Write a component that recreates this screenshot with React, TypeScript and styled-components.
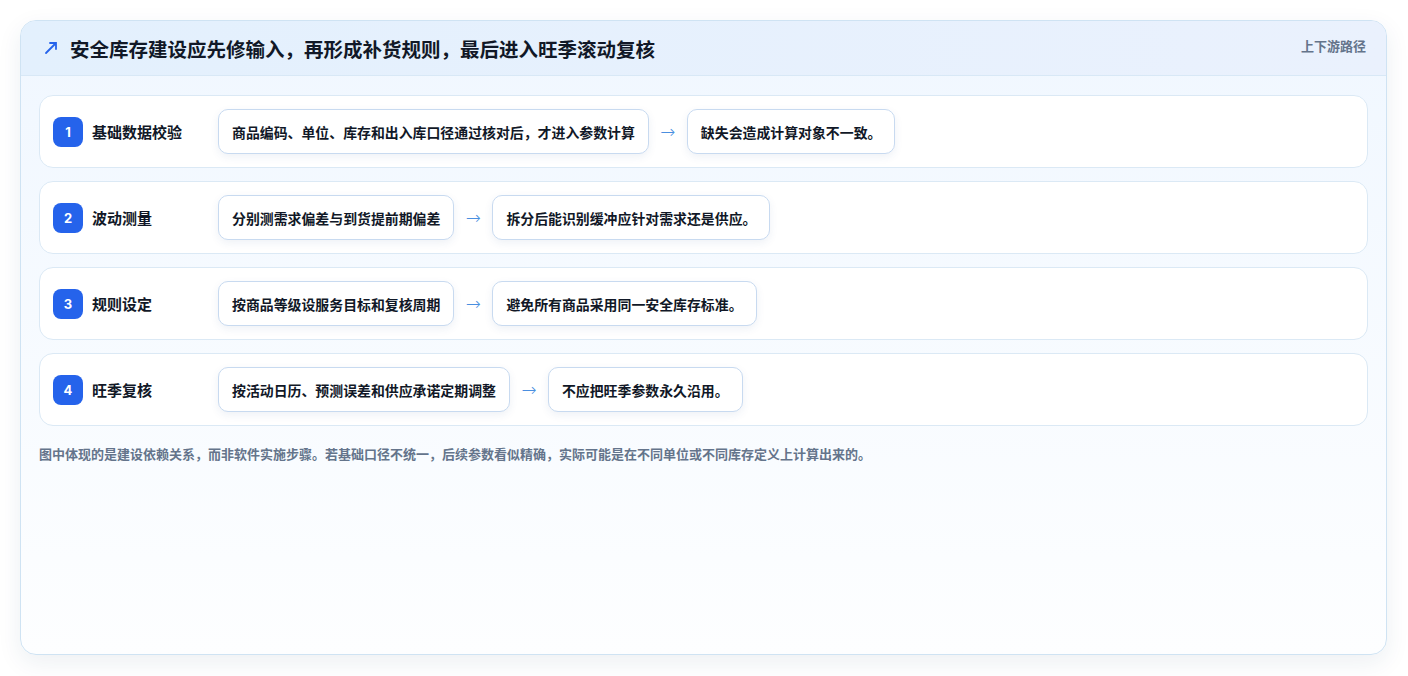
import React from "react";
import styled, { createGlobalStyle } from "styled-components";

const G = createGlobalStyle`
  body { margin: 0; background: #fff; font-family: "Inter", "Noto Sans CJK SC", sans-serif; }
`;
const Page = styled.div`padding: 20px 21px 21px 20px;`;
const Card = styled.div`
  height: 635px; box-sizing: border-box; border: 1px solid #cfe3f3; border-radius: 16px;
  background: linear-gradient(180deg, #f0f7ff 0%, #fdfeff 100%);
  box-shadow: 0 8px 24px rgba(30,60,100,0.08); overflow: hidden;
`;
const Header = styled.div`
  height: 55px; box-sizing: border-box; display: flex; align-items: center; justify-content: space-between;
  padding: 0 20px 0 22px; background: linear-gradient(90deg, #e3f0fd, #eaf1fd); border-bottom: 1px solid #d8e8f6;
`;
const Title = styled.div`
  display: flex; align-items: center; gap: 11px; font-size: 19.5px; font-weight: 700; color: #111827;
`;
const Tag = styled.div`font-size: 13px; font-weight: 600; color: #64748b; align-self: flex-start; margin-top: 15px;`;
const Body = styled.div`padding: 19px 18px 0 18px; display: flex; flex-direction: column; gap: 13px;`;
const Row = styled.div`
  height: 73px; box-sizing: border-box; background: #fff; border: 1px solid #dbe9f5; border-radius: 14px;
  display: flex; align-items: center; padding: 0 13px;
`;
const Badge = styled.div`
  width: 30px; height: 30px; border-radius: 8px; background: #2563eb; color: #fff; font-size: 13px;
  font-weight: 700; display: flex; align-items: center; justify-content: center; flex-shrink: 0;
`;
const Label = styled.div`width: 126px; margin-left: 9px; font-size: 15px; font-weight: 600; color: #111827;`;
const Pill = styled.div`
  height: 45px; box-sizing: border-box; padding: 0 13px; display: flex; align-items: center;
  border: 1px solid #c8daf0; border-radius: 10px; background: #fff; font-size: 13.9px; font-weight: 600;
  color: #111827; box-shadow: 0 3px 8px rgba(40,80,140,0.08); white-space: nowrap;
`;
const Arrow = styled.div`
  width: 38px; text-align: center; color: #4a8fe0; font-size: 18px;
  font-family: "DejaVu Sans", sans-serif; font-weight: 300;
`;
const Note = styled.div`margin-top: 5px; font-size: 13px; font-weight: 600; color: #64748b;`;

const rows = [
  ["基础数据校验", "商品编码、单位、库存和出入库口径通过核对后，才进入参数计算", "缺失会造成计算对象不一致。"],
  ["波动测量", "分别测需求偏差与到货提前期偏差", "拆分后能识别缓冲应针对需求还是供应。"],
  ["规则设定", "按商品等级设服务目标和复核周期", "避免所有商品采用同一安全库存标准。"],
  ["旺季复核", "按活动日历、预测误差和供应承诺定期调整", "不应把旺季参数永久沿用。"],
];

export default function App() {
  return (
    <Page>
      <G />
      <Card>
        <Header>
          <Title>
            <svg width="16" height="16" viewBox="0 0 16 16" fill="none" stroke="#2563eb" strokeWidth="1.8" strokeLinecap="round">
              <path d="M3 13L13 3M7 3h6v6" />
            </svg>
            安全库存建设应先修输入，再形成补货规则，最后进入旺季滚动复核
          </Title>
          <Tag>上下游路径</Tag>
        </Header>
        <Body>
          {rows.map((r, i) => (
            <Row key={i}>
              <Badge>{i + 1}</Badge>
              <Label>{r[0]}</Label>
              <Pill>{r[1]}</Pill>
              <Arrow>→</Arrow>
              <Pill>{r[2]}</Pill>
            </Row>
          ))}
          <Note>图中体现的是建设依赖关系，而非软件实施步骤。若基础口径不统一，后续参数看似精确，实际可能是在不同单位或不同库存定义上计算出来的。</Note>
        </Body>
      </Card>
    </Page>
  );
}
